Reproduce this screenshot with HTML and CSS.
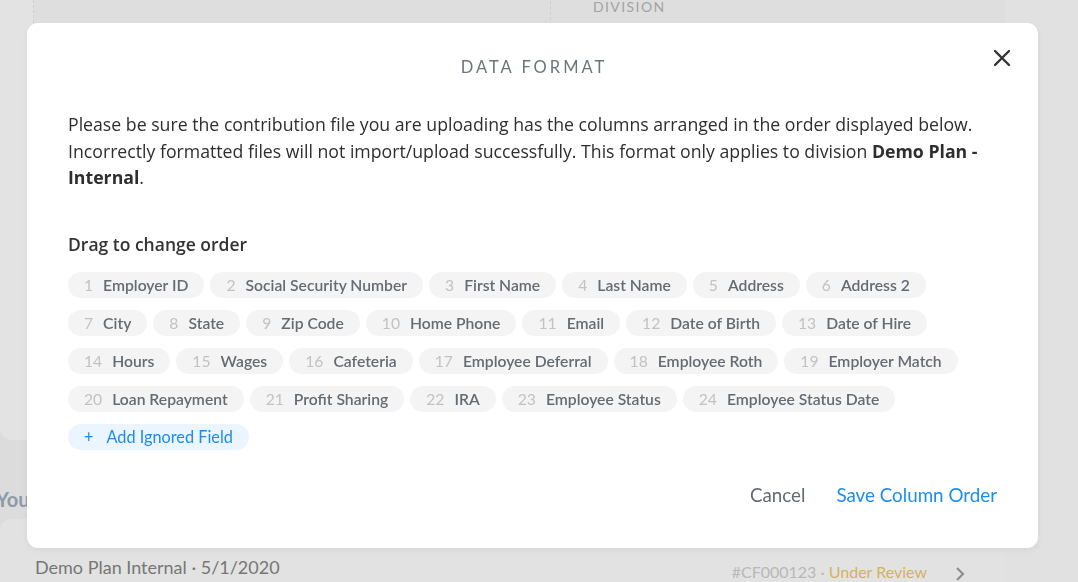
FILE: index.html
```html
<!DOCTYPE html>
<html lang="en">
<head>
<meta charset="utf-8">
<title>Data Format</title>
<link rel="stylesheet" href="styles.css">
</head>
<body>
<div class="page">
  <main class="main">
    <section class="summary-card">
      <div class="summary-col first"></div>
      <div class="summary-col"></div>
      <div class="summary-col last"><span class="label">DIVISION</span></div>
    </section>
    <h2 class="section-title">Your Contributions</h2>
    <section class="list-card">
      <div class="list-row">
        <span class="row-title">Demo Plan Internal · 5/1/2020</span>
        <span class="row-meta"><span class="row-id">#CF000123 · </span><span class="row-status">Under Review</span></span>
        <svg class="chev" width="10" height="16" viewBox="0 0 10 16"><path d="M2 2l6 6-6 6" fill="none" stroke="#8a8a8a" stroke-width="2"/></svg>
      </div>
    </section>
  </main>
  <aside class="side"></aside>
</div>

<div class="overlay">
  <div class="modal" role="dialog" aria-labelledby="modal-title">
    <button class="close" aria-label="Close">
      <svg width="18" height="18" viewBox="0 0 18 18"><path d="M2 2L16 16M16 2L2 16" stroke="#333" stroke-width="2.4" stroke-linecap="round"/></svg>
    </button>
    <h1 class="modal-title" id="modal-title">DATA FORMAT</h1>
    <p class="intro">Please be sure the contribution file you are uploading has the columns arranged in the order displayed below. Incorrectly formatted files will not import/upload successfully. This format only applies to division <b>Demo Plan - Internal</b>.</p>
    <h3 class="drag-title">Drag to change order</h3>
    <div class="chips">
      <span class="chip"><span class="num">1</span>Employer ID</span>
      <span class="chip"><span class="num">2</span>Social Security Number</span>
      <span class="chip"><span class="num">3</span>First Name</span>
      <span class="chip"><span class="num">4</span>Last Name</span>
      <span class="chip"><span class="num">5</span>Address</span>
      <span class="chip"><span class="num">6</span>Address 2</span>
      <span class="chip"><span class="num">7</span>City</span>
      <span class="chip"><span class="num">8</span>State</span>
      <span class="chip"><span class="num">9</span>Zip Code</span>
      <span class="chip"><span class="num">10</span>Home Phone</span>
      <span class="chip"><span class="num">11</span>Email</span>
      <span class="chip"><span class="num">12</span>Date of Birth</span>
      <span class="chip"><span class="num">13</span>Date of Hire</span>
      <span class="chip"><span class="num">14</span>Hours</span>
      <span class="chip"><span class="num">15</span>Wages</span>
      <span class="chip"><span class="num">16</span>Cafeteria</span>
      <span class="chip"><span class="num">17</span>Employee Deferral</span>
      <span class="chip"><span class="num">18</span>Employee Roth</span>
      <span class="chip"><span class="num">19</span>Employer Match</span>
      <span class="chip"><span class="num">20</span>Loan Repayment</span>
      <span class="chip"><span class="num">21</span>Profit Sharing</span>
      <span class="chip"><span class="num">22</span>IRA</span>
      <span class="chip"><span class="num">23</span>Employee Status</span>
      <span class="chip"><span class="num">24</span>Employee Status Date</span>
      <span class="chip add"><span class="plus">+</span>Add Ignored Field</span>
    </div>
    <div class="actions">
      <button class="btn cancel">Cancel</button>
      <button class="btn save">Save Column Order</button>
    </div>
  </div>
</div>
</body>
</html>
```
FILE: styles.css
```css
* { box-sizing: border-box; }
html, body { margin: 0; height: 100%; }
body {
  font-family: "Lato", "Noto Sans", sans-serif;
  background: #dcdcdc;
  overflow: hidden;
}
.page {
  display: flex;
  height: 582px;
}
.main {
  width: 1005px;
  display: flex;
  flex-direction: column;
}
.side {
  flex: 1;
  background: #e1e1e1;
}
.summary-card {
  height: 455px;
  margin-top: -10px;
  background: #dedede;
  border-radius: 0 0 12px 12px;
  display: grid;
  grid-template-columns: 34px 517px 1fr;
}
.summary-col { border-right: 1px dashed #cfcfcf; height: 30px; }
.summary-col.first {
  height: auto;
  background: #e3e3e3;
  border-radius: 0 0 0 12px;
}
.summary-col.last { border-right: none; padding: 6px 0 0 42px; }
.label {
  font-size: 14px;
  letter-spacing: 1.4px;
  color: #a3a3a3;
}
.section-title {
  margin: 47px 0 0 -4px;
  font-size: 20px;
  font-weight: 700;
  color: #8d9aab;
  line-height: 24px;
  white-space: nowrap;
}
.list-card {
  margin-top: 8px;
  flex: 1;
  background: #e2e2e2;
  border-radius: 12px 12px 0 0;
}
.list-row {
  display: flex;
  align-items: center;
  padding: 33px 40px 0 35px;
  font-size: 18px;
}
.row-title { color: #767676; flex: 1; }
.row-meta { font-size: 16px; margin-top: 8px; }
.row-id { color: #b8b8b8; }
.row-status { color: #d4b262; }
.chev { margin: 14px 0 0 28px; }

.overlay {
  position: fixed;
  inset: 0;
}
.modal {
  position: absolute;
  left: 27px;
  top: 23px;
  width: 1011px;
  height: 525px;
  background: #fff;
  border-radius: 11px;
  padding: 34px 41px 0 41px;
  box-shadow: 0 2px 6px rgba(0,0,0,0.05);
}
.close {
  position: absolute;
  right: 27px;
  top: 26px;
  width: 18px;
  height: 18px;
  padding: 0;
  border: 0;
  background: none;
  display: flex;
}
.modal-title {
  margin: 0;
  text-align: center;
  font-size: 16.5px;
  font-weight: 400;
  letter-spacing: 3px;
  color: #6e747c;
  line-height: 20px;
  padding-left: 3px;
}
.intro {
  margin: 34px 0 0;
  font-family: "Open Sans", sans-serif;
  font-size: 17.7px;
  line-height: 26.5px;
  color: #2e2e2e;
}
.intro b { font-weight: 700; }
.drag-title {
  margin: 40px 0 0;
  font-family: "Open Sans", sans-serif;
  font-size: 17.5px;
  font-weight: 600;
  line-height: 26px;
  color: #333;
}
.chips {
  margin-top: 15px;
  display: flex;
  flex-wrap: wrap;
  gap: 12px 6px;
}
.chip {
  display: inline-flex;
  align-items: center;
  height: 26px;
  padding: 0 16px;
  border-radius: 13px;
  background: #f4f4f4;
  color: #646b73;
  font-size: 15.7px;
  font-weight: 600;
  white-space: nowrap;
}
.num {
  color: #c2c2c2;
  font-weight: 400;
  margin-right: 10px;
}
.chip.add {
  background: #ebf5ff;
  color: #1b8cf0;
  font-weight: 400;
  font-size: 16.3px;
}
.plus { margin: 0 13px 0 0; }
.actions {
  display: flex;
  justify-content: flex-end;
  gap: 31px;
  margin-top: 32px;
}
.btn {
  border: 0;
  background: none;
  padding: 0;
  font-family: "Lato", sans-serif;
  font-size: 18.8px;
  line-height: 26px;
  cursor: pointer;
}
.cancel { color: #616a74; }
.save { color: #1a8df2; }
```
